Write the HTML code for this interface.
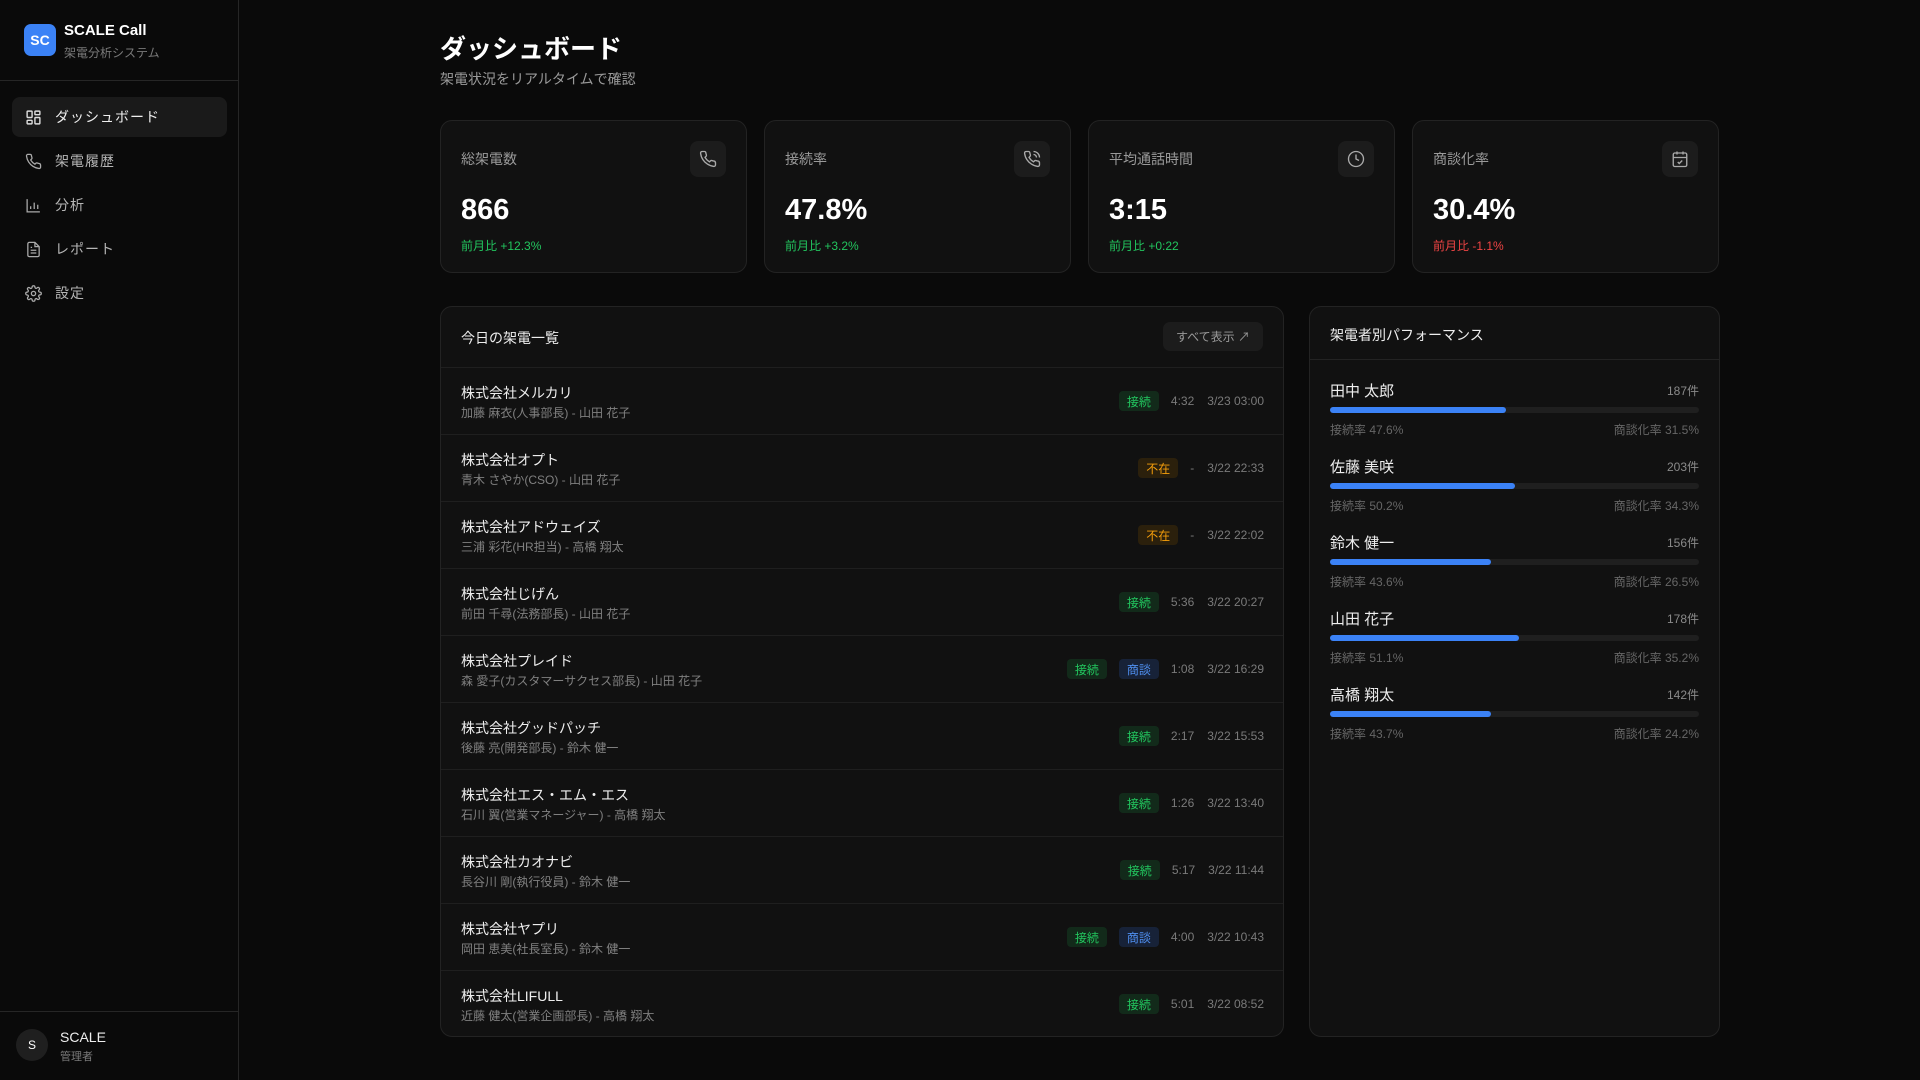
<!DOCTYPE html>
<html><head><meta charset="utf-8"><style>
*{box-sizing:border-box;margin:0;padding:0}
body{width:1920px;height:1080px;background:#0a0a0a;color:#fff;font-family:"Liberation Sans","Noto Sans CJK JP",sans-serif;position:relative;overflow:hidden}
.abs{position:absolute}
.sb{left:0;top:0;width:239px;height:1080px;border-right:1px solid #262626;background:#0a0a0a}
.logo{left:24px;top:24px;width:32px;height:32px;border-radius:7px;background:#3b82f6;font-weight:bold;font-size:14px;display:flex;align-items:center;justify-content:center}
.nav{left:12px;width:215px;height:40px;border-radius:8px;display:flex;align-items:center;padding-left:13px;font-size:14px;color:#b5b5b5;letter-spacing:1px}
.nav svg{margin-right:13px}
.nav.on{background:#1a1a1a;color:#eee}
.card{top:120px;width:307px;height:153px;background:#111;border:1px solid #232323;border-radius:12px}
.card .l{position:absolute;left:20px;top:28px;font-size:14px;color:#9a9a9a}
.card .ib{position:absolute;right:20px;top:20px;width:36px;height:36px;border-radius:8px;background:#1c1c1c;display:flex;align-items:center;justify-content:center}
.card .v{position:absolute;left:20px;top:73px;font-size:29px;font-weight:bold}
.card .c{position:absolute;left:20px;top:116px;font-size:12px;color:#22c55e}
.panel{background:#111;border:1px solid #232323;border-radius:12px;top:306px;height:731px}
.row{position:absolute;left:0;right:0;height:67px;border-top:1px solid #1f1f1f}
.row .n{position:absolute;left:20px;top:15px;font-size:14px;color:#eee}
.row .s{position:absolute;left:20px;top:36px;font-size:12px;color:#808080}
.row .r{position:absolute;right:19px;top:23px;display:flex;align-items:center;font-size:12px;color:#7a7a7a;height:20px}
.b{height:20px;width:40px;border-radius:4px;font-size:12px;display:inline-flex;align-items:center;justify-content:center;margin-right:12px}
.g{background:#122a1a;color:#22c55e}.o{background:#2b200c;color:#f59e0b}.bl{background:#172238;color:#4f8ff0}
.r .t{margin-right:13px}
.p{position:absolute;left:20px;right:20px;height:76px}
.p .nm{position:absolute;left:0;top:6px;font-size:15px;color:#eee}
.p .ct{position:absolute;right:0;top:8px;font-size:12px;color:#8a8a8a}
.p .bar{position:absolute;left:0;right:0;top:33px;height:6px;border-radius:3px;background:#1f1f1f}
.p .bar i{display:block;height:6px;border-radius:3px;background:#3b82f6}
.p .a{position:absolute;left:0;top:47px;font-size:12px;color:#666}
.p .z{position:absolute;right:0;top:47px;font-size:12px;color:#666}
</style></head><body>
<div class="abs sb">
 <div class="abs logo">SC</div>
 <div class="abs" style="left:64px;top:22px;font-size:15px;font-weight:bold">SCALE Call</div>
 <div class="abs" style="left:64px;top:44px;font-size:12px;color:#7a7a7a">架電分析システム</div>
 <div class="abs" style="left:0;top:80px;width:239px;border-top:1px solid #262626"></div>
 <div class="abs nav on" style="top:97px"><svg width="17" height="17" viewBox="0 0 24 24" fill="none" stroke="#ddd" stroke-width="2"><rect x="3" y="3" width="7" height="9" rx="1"/><rect x="14" y="3" width="7" height="5" rx="1"/><rect x="14" y="12" width="7" height="9" rx="1"/><rect x="3" y="16" width="7" height="5" rx="1"/></svg>ダッシュボード</div>
 <div class="abs nav" style="top:141px"><svg width="17" height="17" viewBox="0 0 24 24" fill="none" stroke="#aaa" stroke-width="1.8"><path d="M22 16.9v3a2 2 0 0 1-2.2 2 19.8 19.8 0 0 1-8.6-3.1 19.5 19.5 0 0 1-6-6A19.8 19.8 0 0 1 2.1 4.2 2 2 0 0 1 4.1 2h3a2 2 0 0 1 2 1.7c.1.9.4 1.8.7 2.7a2 2 0 0 1-.5 2.1L8 9.8a16 16 0 0 0 6 6l1.3-1.3a2 2 0 0 1 2.1-.4c.9.3 1.8.6 2.7.7a2 2 0 0 1 1.7 2z"/></svg>架電履歴</div>
 <div class="abs nav" style="top:185px"><svg width="17" height="17" viewBox="0 0 24 24" fill="none" stroke="#aaa" stroke-width="1.8"><path d="M3 3v18h18M8 17v-4M13 17V8M18 17v-6"/></svg>分析</div>
 <div class="abs nav" style="top:229px"><svg width="17" height="17" viewBox="0 0 24 24" fill="none" stroke="#aaa" stroke-width="1.8"><path d="M14 2H6a2 2 0 0 0-2 2v16a2 2 0 0 0 2 2h12a2 2 0 0 0 2-2V8z"/><path d="M14 2v6h6M16 13H8M16 17H8M10 9H8"/></svg>レポート</div>
 <div class="abs nav" style="top:273px"><svg width="17" height="17" viewBox="0 0 24 24" fill="none" stroke="#aaa" stroke-width="1.8"><circle cx="12" cy="12" r="3"/><path d="M19.4 15a1.7 1.7 0 0 0 .3 1.8l.1.1a2 2 0 1 1-2.8 2.8l-.1-.1a1.7 1.7 0 0 0-1.8-.3 1.7 1.7 0 0 0-1 1.5V21a2 2 0 1 1-4 0v-.1a1.7 1.7 0 0 0-1.1-1.5 1.7 1.7 0 0 0-1.8.3l-.1.1a2 2 0 1 1-2.8-2.8l.1-.1a1.7 1.7 0 0 0 .3-1.8 1.7 1.7 0 0 0-1.5-1H3a2 2 0 1 1 0-4h.1a1.7 1.7 0 0 0 1.5-1.1 1.7 1.7 0 0 0-.3-1.8l-.1-.1a2 2 0 1 1 2.8-2.8l.1.1a1.7 1.7 0 0 0 1.8.3H9a1.7 1.7 0 0 0 1-1.5V3a2 2 0 1 1 4 0v.1a1.7 1.7 0 0 0 1 1.5 1.7 1.7 0 0 0 1.8-.3l.1-.1a2 2 0 1 1 2.8 2.8l-.1.1a1.7 1.7 0 0 0-.3 1.8V9a1.7 1.7 0 0 0 1.5 1H21a2 2 0 1 1 0 4h-.1a1.7 1.7 0 0 0-1.5 1z"/></svg>設定</div>
 <div class="abs" style="left:0;top:1011px;width:239px;border-top:1px solid #262626"></div>
 <div class="abs" style="left:16px;top:1029px;width:32px;height:32px;border-radius:50%;background:#1f1f1f;font-size:12px;display:flex;align-items:center;justify-content:center">S</div>
 <div class="abs" style="left:60px;top:1029px;font-size:14px;color:#eee">SCALE</div>
 <div class="abs" style="left:60px;top:1048px;font-size:11px;color:#7a7a7a">管理者</div>
</div>

<div class="abs" style="left:440px;top:29px;font-size:26px;font-weight:bold">ダッシュボード</div>
<div class="abs" style="left:440px;top:69px;font-size:14px;color:#9a9a9a">架電状況をリアルタイムで確認</div>

<div class="abs card" style="left:440px"><div class="l">総架電数</div><div class="ib"><svg width="18" height="18" viewBox="0 0 24 24" fill="none" stroke="#aaa" stroke-width="1.8"><path d="M22 16.9v3a2 2 0 0 1-2.2 2 19.8 19.8 0 0 1-8.6-3.1 19.5 19.5 0 0 1-6-6A19.8 19.8 0 0 1 2.1 4.2 2 2 0 0 1 4.1 2h3a2 2 0 0 1 2 1.7c.1.9.4 1.8.7 2.7a2 2 0 0 1-.5 2.1L8 9.8a16 16 0 0 0 6 6l1.3-1.3a2 2 0 0 1 2.1-.4c.9.3 1.8.6 2.7.7a2 2 0 0 1 1.7 2z"/></svg></div><div class="v">866</div><div class="c">前月比 +12.3%</div></div>
<div class="abs card" style="left:764px"><div class="l">接続率</div><div class="ib"><svg width="18" height="18" viewBox="0 0 24 24" fill="none" stroke="#aaa" stroke-width="1.8"><path d="M22 16.9v3a2 2 0 0 1-2.2 2 19.8 19.8 0 0 1-8.6-3.1 19.5 19.5 0 0 1-6-6A19.8 19.8 0 0 1 2.1 4.2 2 2 0 0 1 4.1 2h3a2 2 0 0 1 2 1.7c.1.9.4 1.8.7 2.7a2 2 0 0 1-.5 2.1L8 9.8a16 16 0 0 0 6 6l1.3-1.3a2 2 0 0 1 2.1-.4c.9.3 1.8.6 2.7.7a2 2 0 0 1 1.7 2z"/><path d="M14 2a8 8 0 0 1 8 8M14 6a4 4 0 0 1 4 4"/></svg></div><div class="v">47.8%</div><div class="c">前月比 +3.2%</div></div>
<div class="abs card" style="left:1088px"><div class="l">平均通話時間</div><div class="ib"><svg width="18" height="18" viewBox="0 0 24 24" fill="none" stroke="#aaa" stroke-width="1.8"><circle cx="12" cy="12" r="10"/><path d="M12 6v6l4 2"/></svg></div><div class="v">3:15</div><div class="c">前月比 +0:22</div></div>
<div class="abs card" style="left:1412px"><div class="l">商談化率</div><div class="ib"><svg width="18" height="18" viewBox="0 0 24 24" fill="none" stroke="#aaa" stroke-width="1.8"><rect x="3" y="4" width="18" height="18" rx="2"/><path d="M16 2v4M8 2v4M3 10h18M9 16l2 2 4-4"/></svg></div><div class="v">30.4%</div><div class="c" style="color:#ef4444">前月比 -1.1%</div></div>

<div class="abs panel" style="left:440px;width:844px">
 <div class="abs" style="left:20px;top:21px;font-size:14px;color:#eee">今日の架電一覧</div>
 <div class="abs" style="right:20px;top:15px;width:100px;height:29px;border-radius:7px;background:#1c1c1c;font-size:12px;color:#999;display:flex;align-items:center;justify-content:center">すべて表示 ↗</div>
 <div class="row" style="top:60px"><div class="n">株式会社メルカリ</div><div class="s">加藤 麻衣(人事部長) - 山田 花子</div><div class="r"><span class="b g">接続</span><span class="t">4:32</span><span>3/23 03:00</span></div></div>
 <div class="row" style="top:127px"><div class="n">株式会社オプト</div><div class="s">青木 さやか(CSO) - 山田 花子</div><div class="r"><span class="b o">不在</span><span class="t">-</span><span>3/22 22:33</span></div></div>
 <div class="row" style="top:194px"><div class="n">株式会社アドウェイズ</div><div class="s">三浦 彩花(HR担当) - 高橋 翔太</div><div class="r"><span class="b o">不在</span><span class="t">-</span><span>3/22 22:02</span></div></div>
 <div class="row" style="top:261px"><div class="n">株式会社じげん</div><div class="s">前田 千尋(法務部長) - 山田 花子</div><div class="r"><span class="b g">接続</span><span class="t">5:36</span><span>3/22 20:27</span></div></div>
 <div class="row" style="top:328px"><div class="n">株式会社プレイド</div><div class="s">森 愛子(カスタマーサクセス部長) - 山田 花子</div><div class="r"><span class="b g">接続</span><span class="b bl">商談</span><span class="t">1:08</span><span>3/22 16:29</span></div></div>
 <div class="row" style="top:395px"><div class="n">株式会社グッドパッチ</div><div class="s">後藤 亮(開発部長) - 鈴木 健一</div><div class="r"><span class="b g">接続</span><span class="t">2:17</span><span>3/22 15:53</span></div></div>
 <div class="row" style="top:462px"><div class="n">株式会社エス・エム・エス</div><div class="s">石川 翼(営業マネージャー) - 高橋 翔太</div><div class="r"><span class="b g">接続</span><span class="t">1:26</span><span>3/22 13:40</span></div></div>
 <div class="row" style="top:529px"><div class="n">株式会社カオナビ</div><div class="s">長谷川 剛(執行役員) - 鈴木 健一</div><div class="r"><span class="b g">接続</span><span class="t">5:17</span><span>3/22 11:44</span></div></div>
 <div class="row" style="top:596px"><div class="n">株式会社ヤプリ</div><div class="s">岡田 恵美(社長室長) - 鈴木 健一</div><div class="r"><span class="b g">接続</span><span class="b bl">商談</span><span class="t">4:00</span><span>3/22 10:43</span></div></div>
 <div class="row" style="top:663px"><div class="n">株式会社LIFULL</div><div class="s">近藤 健太(営業企画部長) - 高橋 翔太</div><div class="r"><span class="b g">接続</span><span class="t">5:01</span><span>3/22 08:52</span></div></div>
</div>

<div class="abs panel" style="left:1309px;width:411px">
 <div class="abs" style="left:20px;top:18px;font-size:14px;color:#eee">架電者別パフォーマンス</div>
 <div class="abs" style="left:0;right:0;top:52px;border-top:1px solid #232323"></div>
 <div class="p" style="top:67px"><div class="nm">田中 太郎</div><div class="ct">187件</div><div class="bar"><i style="width:47.6%"></i></div><div class="a">接続率 47.6%</div><div class="z">商談化率 31.5%</div></div>
 <div class="p" style="top:143px"><div class="nm">佐藤 美咲</div><div class="ct">203件</div><div class="bar"><i style="width:50.2%"></i></div><div class="a">接続率 50.2%</div><div class="z">商談化率 34.3%</div></div>
 <div class="p" style="top:219px"><div class="nm">鈴木 健一</div><div class="ct">156件</div><div class="bar"><i style="width:43.6%"></i></div><div class="a">接続率 43.6%</div><div class="z">商談化率 26.5%</div></div>
 <div class="p" style="top:295px"><div class="nm">山田 花子</div><div class="ct">178件</div><div class="bar"><i style="width:51.1%"></i></div><div class="a">接続率 51.1%</div><div class="z">商談化率 35.2%</div></div>
 <div class="p" style="top:371px"><div class="nm">高橋 翔太</div><div class="ct">142件</div><div class="bar"><i style="width:43.7%"></i></div><div class="a">接続率 43.7%</div><div class="z">商談化率 24.2%</div></div>
</div>
</body></html>
